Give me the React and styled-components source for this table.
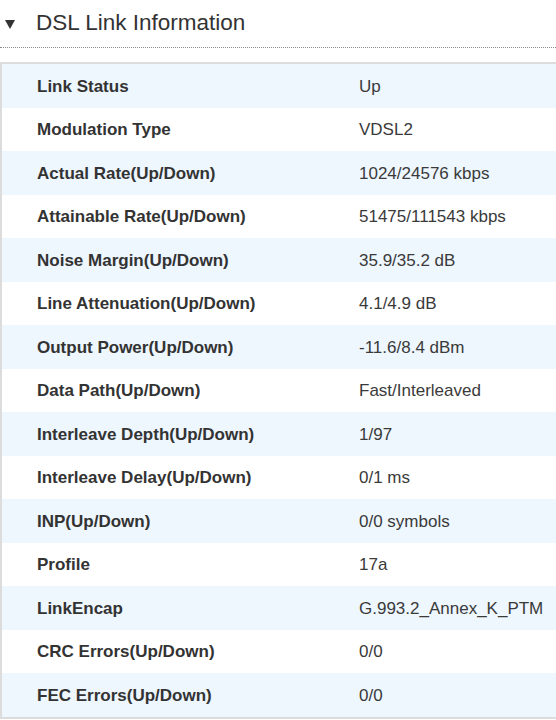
import React from "react";
import styled, { createGlobalStyle } from "styled-components";

const Global = createGlobalStyle`
  html, body { margin: 0; padding: 0; background: #fff; }
  body { font-family: "Liberation Sans", Arial, Helvetica, sans-serif; overflow: hidden; }
`;

const Page = styled.div`
  width: 556px;
  height: 720px;
  overflow: hidden;
`;

const Header = styled.div`
  display: flex;
  align-items: center;
  height: 47px;
  border-bottom: 1px dotted #8a8a8a;
  box-sizing: content-box;
`;

const Caret = styled.span`
  width: 0;
  height: 0;
  margin: 2px 0 0 5px;
  border-left: 5.5px solid transparent;
  border-right: 5.5px solid transparent;
  border-top: 9px solid #333;
`;

const Title = styled.h2`
  margin: 0 0 0 21px;
  font-weight: normal;
  font-size: 22.5px;
  color: #333;
  position: relative;
  top: -1px;
`;

const Table = styled.div`
  margin-top: 14px;
  border: 2px solid #dcdcdc;
  border-right: none;
  width: 600px;
`;

const Row = styled.div`
  display: grid;
  grid-template-columns: 322px 1fr;
  align-items: center;
  box-sizing: border-box;
  height: 43.5px;
  padding: 2px 0 0 35px;
  background: ${(p) => (p.$shade ? "#eef6fe" : "#fff")};
  font-size: 17px;
`;

const Label = styled.span`
  font-weight: bold;
  color: #333;
`;

const Value = styled.span`
  color: #3a3a3a;
`;

const rows = [
  ["Link Status", "Up"],
  ["Modulation Type", "VDSL2"],
  ["Actual Rate(Up/Down)", "1024/24576 kbps"],
  ["Attainable Rate(Up/Down)", "51475/111543 kbps"],
  ["Noise Margin(Up/Down)", "35.9/35.2 dB"],
  ["Line Attenuation(Up/Down)", "4.1/4.9 dB"],
  ["Output Power(Up/Down)", "-11.6/8.4 dBm"],
  ["Data Path(Up/Down)", "Fast/Interleaved"],
  ["Interleave Depth(Up/Down)", "1/97"],
  ["Interleave Delay(Up/Down)", "0/1 ms"],
  ["INP(Up/Down)", "0/0 symbols"],
  ["Profile", "17a"],
  ["LinkEncap", "G.993.2_Annex_K_PTM"],
  ["CRC Errors(Up/Down)", "0/0"],
  ["FEC Errors(Up/Down)", "0/0"],
];

export default function App() {
  return (
    <Page>
      <Global />
      <Header>
        <Caret />
        <Title>DSL Link Information</Title>
      </Header>
      <Table>
        {rows.map(([l, v], i) => (
          <Row key={l} $shade={i % 2 === 0}>
            <Label>{l}</Label>
            <Value>{v}</Value>
          </Row>
        ))}
      </Table>
    </Page>
  );
}
